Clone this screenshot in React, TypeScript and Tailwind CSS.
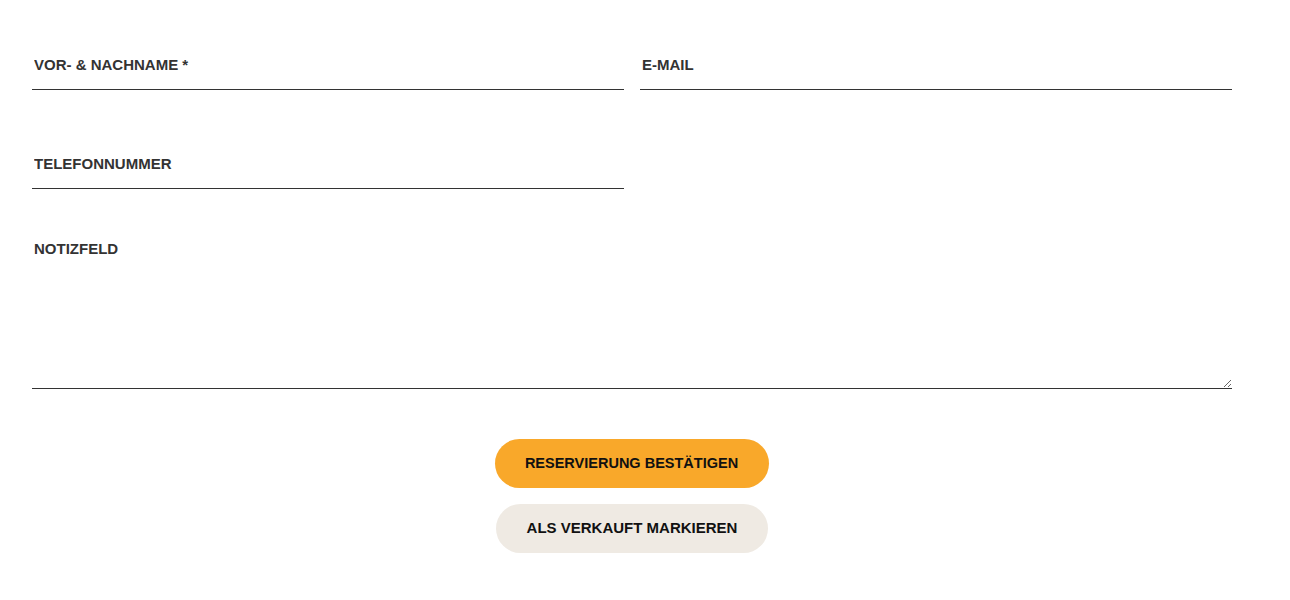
import React from "react";

export default function App() {
  const inputCls =
    "w-full h-[50px] border-0 border-b border-[#333333] bg-transparent px-[2px] text-[15px] font-semibold uppercase text-[#333333] placeholder:text-[#333333] outline-none";
  return (
    <div className="min-h-[600px] bg-white" style={{ fontFamily: '"Liberation Sans", Arial, sans-serif' }}>
      <form className="w-[1200px] ml-[32px] pt-[40px] flex flex-col">
        <div className="grid grid-cols-2 gap-x-[16px]">
          <input className={inputCls} placeholder="VOR- & NACHNAME *" />
          <input className={inputCls} placeholder="E-MAIL" />
        </div>
        <div className="grid grid-cols-2 gap-x-[16px] mt-[49px]">
          <input className={inputCls} placeholder="TELEFONNUMMER" />
        </div>
        <textarea
          className="mt-[48px] w-full h-[152px] border-0 border-b border-[#333333] bg-transparent px-[2px] pt-[2px] text-[15px] leading-[20px] font-semibold uppercase text-[#333333] placeholder:text-[#333333] outline-none"
          placeholder="NOTIZFELD"
        />
        <div className="mt-[50px] flex flex-col items-center gap-[16px]">
          <button
            type="button"
            className="w-[274px] h-[49px] rounded-full bg-[#F9A82A] text-[14.5px] font-bold text-[#111111] -ml-[1px]"
          >
            RESERVIERUNG BESTÄTIGEN
          </button>
          <button
            type="button"
            className="w-[272px] h-[49px] rounded-full bg-[#EFEAE3] text-[15px] font-bold text-[#111111]"
          >
            ALS VERKAUFT MARKIEREN
          </button>
        </div>
      </form>
    </div>
  );
}
